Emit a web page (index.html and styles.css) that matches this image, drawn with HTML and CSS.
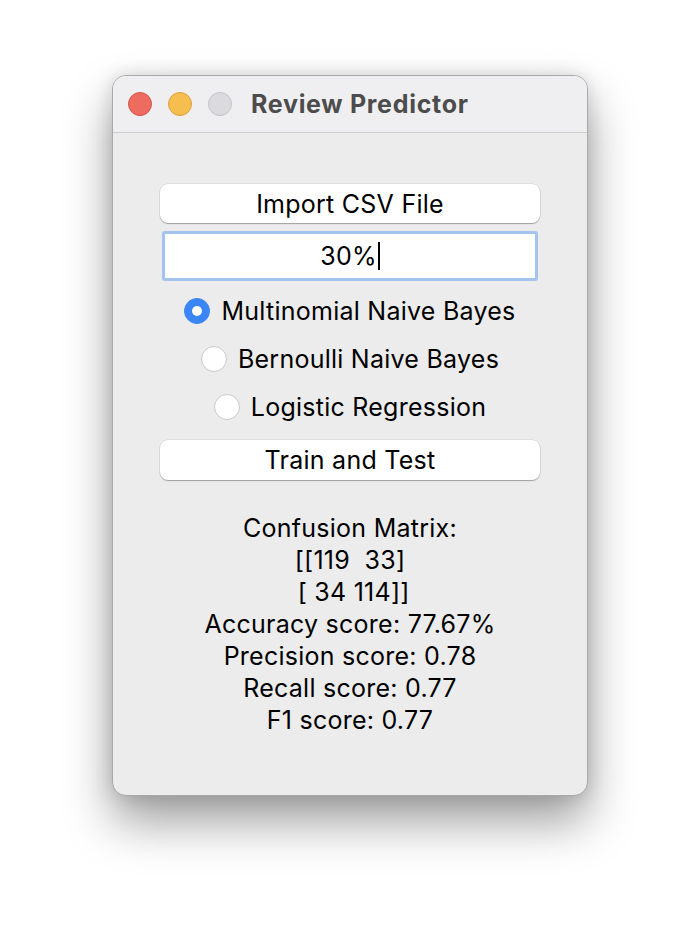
FILE: index.html
```html
<!DOCTYPE html>
<html>
<head>
<meta charset="utf-8">
<link rel="stylesheet" href="styles.css">
</head>
<body>
<div class="window">
  <div class="titlebar">
    <div class="lights">
      <span class="light red"></span>
      <span class="light yellow"></span>
      <span class="light gray"></span>
    </div>
    <div class="title">Review Predictor</div>
  </div>
  <div class="content">
    <div class="button">Import CSV File</div>
    <div class="entry"><span>30%</span><span class="caret"></span></div>
    <div class="radios">
      <div class="radio"><span class="dot checked"></span><span>Multinomial Naive Bayes</span></div>
      <div class="radio"><span class="dot"></span><span>Bernoulli Naive Bayes</span></div>
      <div class="radio"><span class="dot"></span><span>Logistic Regression</span></div>
    </div>
    <div class="button train">Train and Test</div>
    <div class="results">
      <div>Confusion Matrix:</div>
      <div class="pre">[[119  33]</div>
      <div class="pre"> [ 34 114]]</div>
      <div>Accuracy score: 77.67%</div>
      <div>Precision score: 0.78</div>
      <div>Recall score: 0.77</div>
      <div>F1 score: 0.77</div>
    </div>
  </div>
</div>
</body>
</html>
```
FILE: styles.css
```css
html, body {
  margin: 0;
  padding: 0;
  background: #ffffff;
}
body {
  width: 700px;
  height: 944px;
  overflow: hidden;
  font-family: Inter, "Liberation Sans", sans-serif;
  color: #000;
}
.window {
  margin: 75px 0 0 112px;
  width: 476px;
  height: 721px;
  box-sizing: border-box;
  border-radius: 14px;
  border: 1px solid #a9a9a9;
  background: #ececec;
  overflow: hidden;
  box-shadow: 0 26px 48px rgba(0,0,0,0.38), 0 0 18px rgba(0,0,0,0.14);
}
.titlebar {
  height: 56px;
  background: #efeef1;
  border-bottom: 1px solid #cfcfcf;
  display: flex;
  align-items: center;
}
.lights {
  display: flex;
  gap: 16px;
  padding-left: 15px;
}
.light {
  width: 24px;
  height: 24px;
  border-radius: 50%;
  box-sizing: border-box;
}
.red { background: #ee6b60; border: 1px solid #d5544a; }
.yellow { background: #f6be4f; border: 1px solid #dba23a; }
.gray { background: #dbdadd; border: 1px solid #c3c2c6; }
.title {
  margin-left: 19px;
  font-size: 25px;
  font-weight: 700;
  color: #4c4c4c;
  letter-spacing: 0.7px;
}
.content {
  display: flex;
  flex-direction: column;
  align-items: center;
  padding-top: 51px;
  font-size: 25px;
  letter-spacing: 0.25px;
}
.button {
  width: 380px;
  height: 39px;
  background: #fff;
  border-radius: 8px;
  box-shadow: 0 1px 1px rgba(0,0,0,0.28), 0 0 0 0.5px rgba(0,0,0,0.12);
  display: flex;
  align-items: center;
  justify-content: center;
}
.entry {
  margin-top: 8px;
  width: 376px;
  height: 50px;
  box-sizing: border-box;
  border: 3px solid #a4c4ef;
  border-radius: 3px;
  background: #fff;
  display: flex;
  align-items: center;
  justify-content: center;
}
.caret {
  display: inline-block;
  width: 2px;
  height: 28px;
  background: #000;
  margin-left: 1px;
}
.radios {
  display: flex;
  flex-direction: column;
  align-items: center;
  margin-top: 16px;
  gap: 20px;
}
.radio {
  display: flex;
  align-items: center;
  height: 28px;
  gap: 11px;
}
.dot {
  width: 26px;
  height: 26px;
  border-radius: 50%;
  box-sizing: border-box;
  background: #fff;
  border: 1px solid #c9c9c9;
  position: relative;
}
.dot.checked {
  background: #3b86f7;
  border-color: #3b86f7;
}
.dot.checked::after {
  content: "";
  position: absolute;
  left: 50%;
  top: 50%;
  width: 10px;
  height: 10px;
  margin: -5px 0 0 -5px;
  border-radius: 50%;
  background: #fff;
}
.train {
  margin-top: 19px;
  height: 40px;
}
.results {
  margin-top: 32px;
  text-align: center;
  line-height: 32px;
}
.pre {
  white-space: pre;
}
```
